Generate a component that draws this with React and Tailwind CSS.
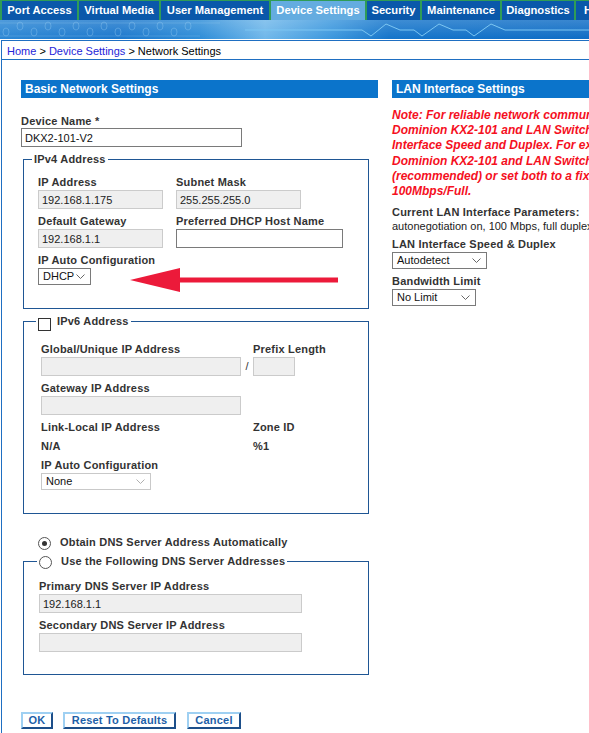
import React from "react";

const tabs = [
  { t: "Port Access", w: "w-[75px]" },
  { t: "Virtual Media", w: "w-[80px]" },
  { t: "User Management", w: "w-[108px]" },
  { t: "Device Settings", w: "w-[94px]", active: true },
  { t: "Security", w: "w-[53px]" },
  { t: "Maintenance", w: "w-[78px]" },
  { t: "Diagnostics", w: "w-[72px]" },
  { t: "Help", w: "w-[40px]" },
];

function Chevron({ light }) {
  return (
    <svg width="9" height="5" viewBox="0 0 9 5" className="block">
      <path d="M0.5 0.5 L4.5 4.5 L8.5 0.5" fill="none" stroke={light ? "#b0b0b0" : "#666"} strokeWidth="1" />
    </svg>
  );
}

function Select({ value, w, light }) {
  return (
    <div
      className={`${w} mt-[1px] flex h-[17px] items-center justify-between bg-white pl-[4px] pr-[5px] text-[11px] text-[#111] border ${
        light ? "border-[#c9c9c9]" : "border-[#7a7a7a]"
      }`}
    >
      <span>{value}</span>
      <Chevron light={light} />
    </div>
  );
}

function Label({ children, className = "" }) {
  return (
    <div className={`text-[11px] font-bold leading-[14px] tracking-[0.2px] text-[#333] whitespace-nowrap ${className}`}>
      {children}
    </div>
  );
}

function Field({ value = "", w, disabled = true }) {
  return (
    <input
      readOnly
      value={value}
      className={`${w} mt-[1px] block h-[19px] px-[3px] text-[11px] text-[#222] outline-none border ${
        disabled ? "bg-[#efefef] border-[#cbcbcb]" : "bg-white border-[#7a7a7a]"
      }`}
    />
  );
}

function Radio({ checked }) {
  return (
    <div className="flex h-[13px] w-[13px] shrink-0 items-center justify-center rounded-full border border-[#555] bg-white">
      {checked && <div className="h-[5px] w-[5px] rounded-full bg-[#333]" />}
    </div>
  );
}

function Banner() {
  return (
    <svg width="589" height="19" className="block">
      <defs>
        <linearGradient id="bgH" x1="0" x2="1" y1="0" y2="0">
          <stop offset="0" stopColor="#2a86d4" />
          <stop offset="0.2" stopColor="#1b77cc" />
          <stop offset="0.34" stopColor="#2e8dd8" />
          <stop offset="0.45" stopColor="#6fb7ea" />
          <stop offset="0.56" stopColor="#3c98de" />
          <stop offset="0.66" stopColor="#1474ca" />
          <stop offset="1" stopColor="#0e6cc5" />
        </linearGradient>
        <linearGradient id="bgV" x1="0" x2="0" y1="0" y2="1">
          <stop offset="0" stopColor="#ffffff" stopOpacity="0.18" />
          <stop offset="1" stopColor="#ffffff" stopOpacity="0" />
        </linearGradient>
      </defs>
      <rect width="589" height="19" fill="url(#bgH)" />
      <rect width="589" height="19" fill="url(#bgV)" />
      <g fill="none" stroke="#9fd2f4" strokeOpacity="0.35" strokeWidth="1">
        {[6, 20, 34, 48, 62, 76, 90, 104, 118, 132, 146, 160, 174, 188].map((x, i) => (
          <ellipse key={x} cx={x} cy={i % 2 ? 6 : 12} rx="3" ry="4" />
        ))}
        <path d="M0 3 H220 M0 16 H200" strokeOpacity="0.25" />
      </g>
      <polyline
        points="245,10 362,10 371,16 386,4 400,10 414,10 422,16 439,4 453,10 466,10 474,16 491,4 505,10 589,10"
        fill="none"
        stroke="#7cc6f2"
        strokeWidth="1"
      />
    </svg>
  );
}

const btn =
  "flex h-[17px] items-center justify-center border-2 border-b-[#1d4f8a] border-l-[#9fd0f2] border-r-[#1d4f8a] border-t-[#9fd0f2] bg-white text-[11px] font-bold tracking-[0.2px] text-[#1e5fa8]";

export default function App() {
  return (
    <div className="relative h-[733px] w-[589px] overflow-hidden bg-white font-['Liberation_Sans',Arial,sans-serif]">
      {/* Top nav */}
      <div className="flex h-[20px] items-end gap-[2px] bg-[#2f9c57] pl-[2px]">
        {tabs.map((t) => (
          <div
            key={t.t}
            className={`${t.w} flex h-[19px] shrink-0 items-center justify-center whitespace-nowrap text-[11.2px] font-bold text-white ${
              t.active ? "bg-[#64ace0]" : "bg-[#0a58aa]"
            }`}
          >
            {t.t}
          </div>
        ))}
      </div>
      <Banner />
      <div className="h-[1px] bg-white" />

      {/* Main box */}
      <div className="ml-[1px] h-[700px] border-l border-t border-[#1f6fc2]">
        <div className="flex h-[19px] items-center border-b border-[#1f6fc2] pl-[5px] pt-[2px] text-[11px] text-black">
          <span className="text-[#2424d8]">Home</span>
          <span>&nbsp;&gt;&nbsp;</span>
          <span className="text-[#2424d8]">Device Settings</span>
          <span>&nbsp;&gt; Network Settings</span>
        </div>

        <div className="flex pl-[19px] pt-[20px]">
          {/* Left column */}
          <div className="w-[357px] shrink-0">
            <div className="flex h-[18px] items-center bg-[#0b74cb] pl-[4px] text-[12px] font-bold text-white">
              Basic Network Settings
            </div>

            <Label className="mt-[16px]">Device Name *</Label>
            <input
              readOnly
              value="DKX2-101-V2"
              className="block h-[19px] w-[221px] border border-[#7a7a7a] bg-white px-[3px] text-[11px] text-[#111] outline-none"
            />

            {/* IPv4 */}
            <div className="relative ml-[2px] mt-[5px] w-[346px]">
              <fieldset className="border border-[#1f5694]">
                <legend className="ml-[8px] px-[2px] text-[11px] font-bold leading-[14px] tracking-[0.2px] text-[#333]">
                  IPv4 Address
                </legend>
                <div className="pb-[23px] pl-[14px] pt-[9px]">
                  <div className="grid grid-cols-[125px_1fr] gap-x-[13px]">
                    <div>
                      <Label>IP Address</Label>
                      <Field value="192.168.1.175" w="w-[125px]" />
                    </div>
                    <div>
                      <Label>Subnet Mask</Label>
                      <Field value="255.255.255.0" w="w-[125px]" />
                    </div>
                    <div className="mt-[5px]">
                      <Label>Default Gateway</Label>
                      <Field value="192.168.1.1" w="w-[125px]" />
                    </div>
                    <div className="mt-[5px]">
                      <Label>Preferred DHCP Host Name</Label>
                      <Field value="" w="w-[167px]" disabled={false} />
                    </div>
                  </div>
                  <Label className="mt-[5px]">IP Auto Configuration</Label>
                  <Select value="DHCP" w="w-[53px]" />
                </div>
              </fieldset>
              {/* red arrow overlay */}
              <svg width="210" height="26" viewBox="0 0 210 26" className="absolute left-[107px] top-[115px]">
                <polygon points="0,13 50,1 50,25" fill="#ec1a3a" />
                <rect x="48" y="10.5" width="160" height="5" fill="#ec1a3a" />
              </svg>
            </div>

            {/* IPv6 */}
            <fieldset className="ml-[2px] mt-[5px] w-[346px] border border-[#1f5694]">
              <legend className="ml-[12px] px-[2px]">
                <span className="flex h-[14px] items-center">
                  <span className="block h-[13px] w-[13px] translate-y-[3px] border border-[#333] bg-white" />
                  <span className="ml-[6px] text-[11px] font-bold leading-[14px] tracking-[0.2px] text-[#333]">IPv6 Address</span>
                </span>
              </legend>
              <div className="pb-[23px] pl-[17px] pt-[14px]">
                <div className="grid grid-cols-[200px_12px_42px]">
                  <Label>Global/Unique IP Address</Label>
                  <div />
                  <Label>Prefix Length</Label>
                  <Field w="w-[200px]" />
                  <div className="mt-[1px] flex items-end justify-center pb-[2px] text-[11px] text-[#333]">/</div>
                  <Field w="w-[42px]" />
                </div>
                <Label className="mt-[5px]">Gateway IP Address</Label>
                <Field w="w-[200px]" />
                <div className="mt-[5px] grid grid-cols-[212px_1fr] gap-y-[5px]">
                  <Label>Link-Local IP Address</Label>
                  <Label>Zone ID</Label>
                  <Label>N/A</Label>
                  <Label>%1</Label>
                </div>
                <Label className="mt-[5px]">IP Auto Configuration</Label>
                <Select value="None" w="w-[110px]" light />
              </div>
            </fieldset>

            {/* DNS */}
            <div className="mt-[21px] flex h-[14px] items-center pl-[17px]">
              <span className="translate-y-[1px]">
                <Radio checked />
              </span>
              <span className="ml-[9px] text-[11px] font-bold tracking-[0.2px] text-[#333]">
                Obtain DNS Server Address Automatically
              </span>
            </div>
            <fieldset className="ml-[2px] mt-[5px] w-[346px] border border-[#1f5694]">
              <legend className="ml-[13px] px-[2px]">
                <span className="flex h-[14px] items-center">
                  <span className="translate-y-[1px]">
                    <Radio />
                  </span>
                  <span className="ml-[9px] text-[11px] font-bold leading-[14px] tracking-[0.2px] text-[#333]">
                    Use the Following DNS Server Addresses
                  </span>
                </span>
              </legend>
              <div className="pb-[22px] pl-[15px] pt-[11px]">
                <Label>Primary DNS Server IP Address</Label>
                <Field value="192.168.1.1" w="w-[263px]" />
                <Label className="mt-[5px]">Secondary DNS Server IP Address</Label>
                <Field w="w-[263px]" />
              </div>
            </fieldset>

            {/* Buttons */}
            <div className="mt-[37px] flex">
              <button className={`${btn} w-[32px]`}>OK</button>
              <button className={`${btn} ml-[10px] w-[113px]`}>Reset To Defaults</button>
              <button className={`${btn} ml-[11px] w-[54px]`}>Cancel</button>
            </div>
          </div>

          {/* Right column */}
          <div className="ml-[14px] w-[330px] shrink-0">
            <div className="flex h-[18px] items-center whitespace-nowrap bg-[#0b74cb] pl-[4px] text-[12px] font-bold text-white">
              LAN Interface Settings
            </div>
            <div className="mt-[10px] whitespace-nowrap text-[12px] font-bold italic leading-[15.2px] text-[#f5101e]">
              <div>Note: For reliable network communication, configure the</div>
              <div>Dominion KX2-101 and LAN Switch to use the same LAN</div>
              <div>Interface Speed and Duplex. For example, configure both the</div>
              <div>Dominion KX2-101 and LAN Switch to Autodetect</div>
              <div>(recommended) or set both to a fixed speed/duplex such as</div>
              <div>100Mbps/Full.</div>
            </div>
            <Label className="mt-[6px]">Current LAN Interface Parameters:</Label>
            <div className="whitespace-nowrap text-[11px] leading-[14px] text-[#222]">
              autonegotiation on, 100 Mbps, full duplex, link ok
            </div>
            <Label className="mt-[4px]">LAN Interface Speed &amp; Duplex</Label>
            <Select value="Autodetect" w="w-[95px]" />
            <Label className="mt-[5px]">Bandwidth Limit</Label>
            <Select value="No Limit" w="w-[84px]" />
          </div>
        </div>
      </div>
    </div>
  );
}
